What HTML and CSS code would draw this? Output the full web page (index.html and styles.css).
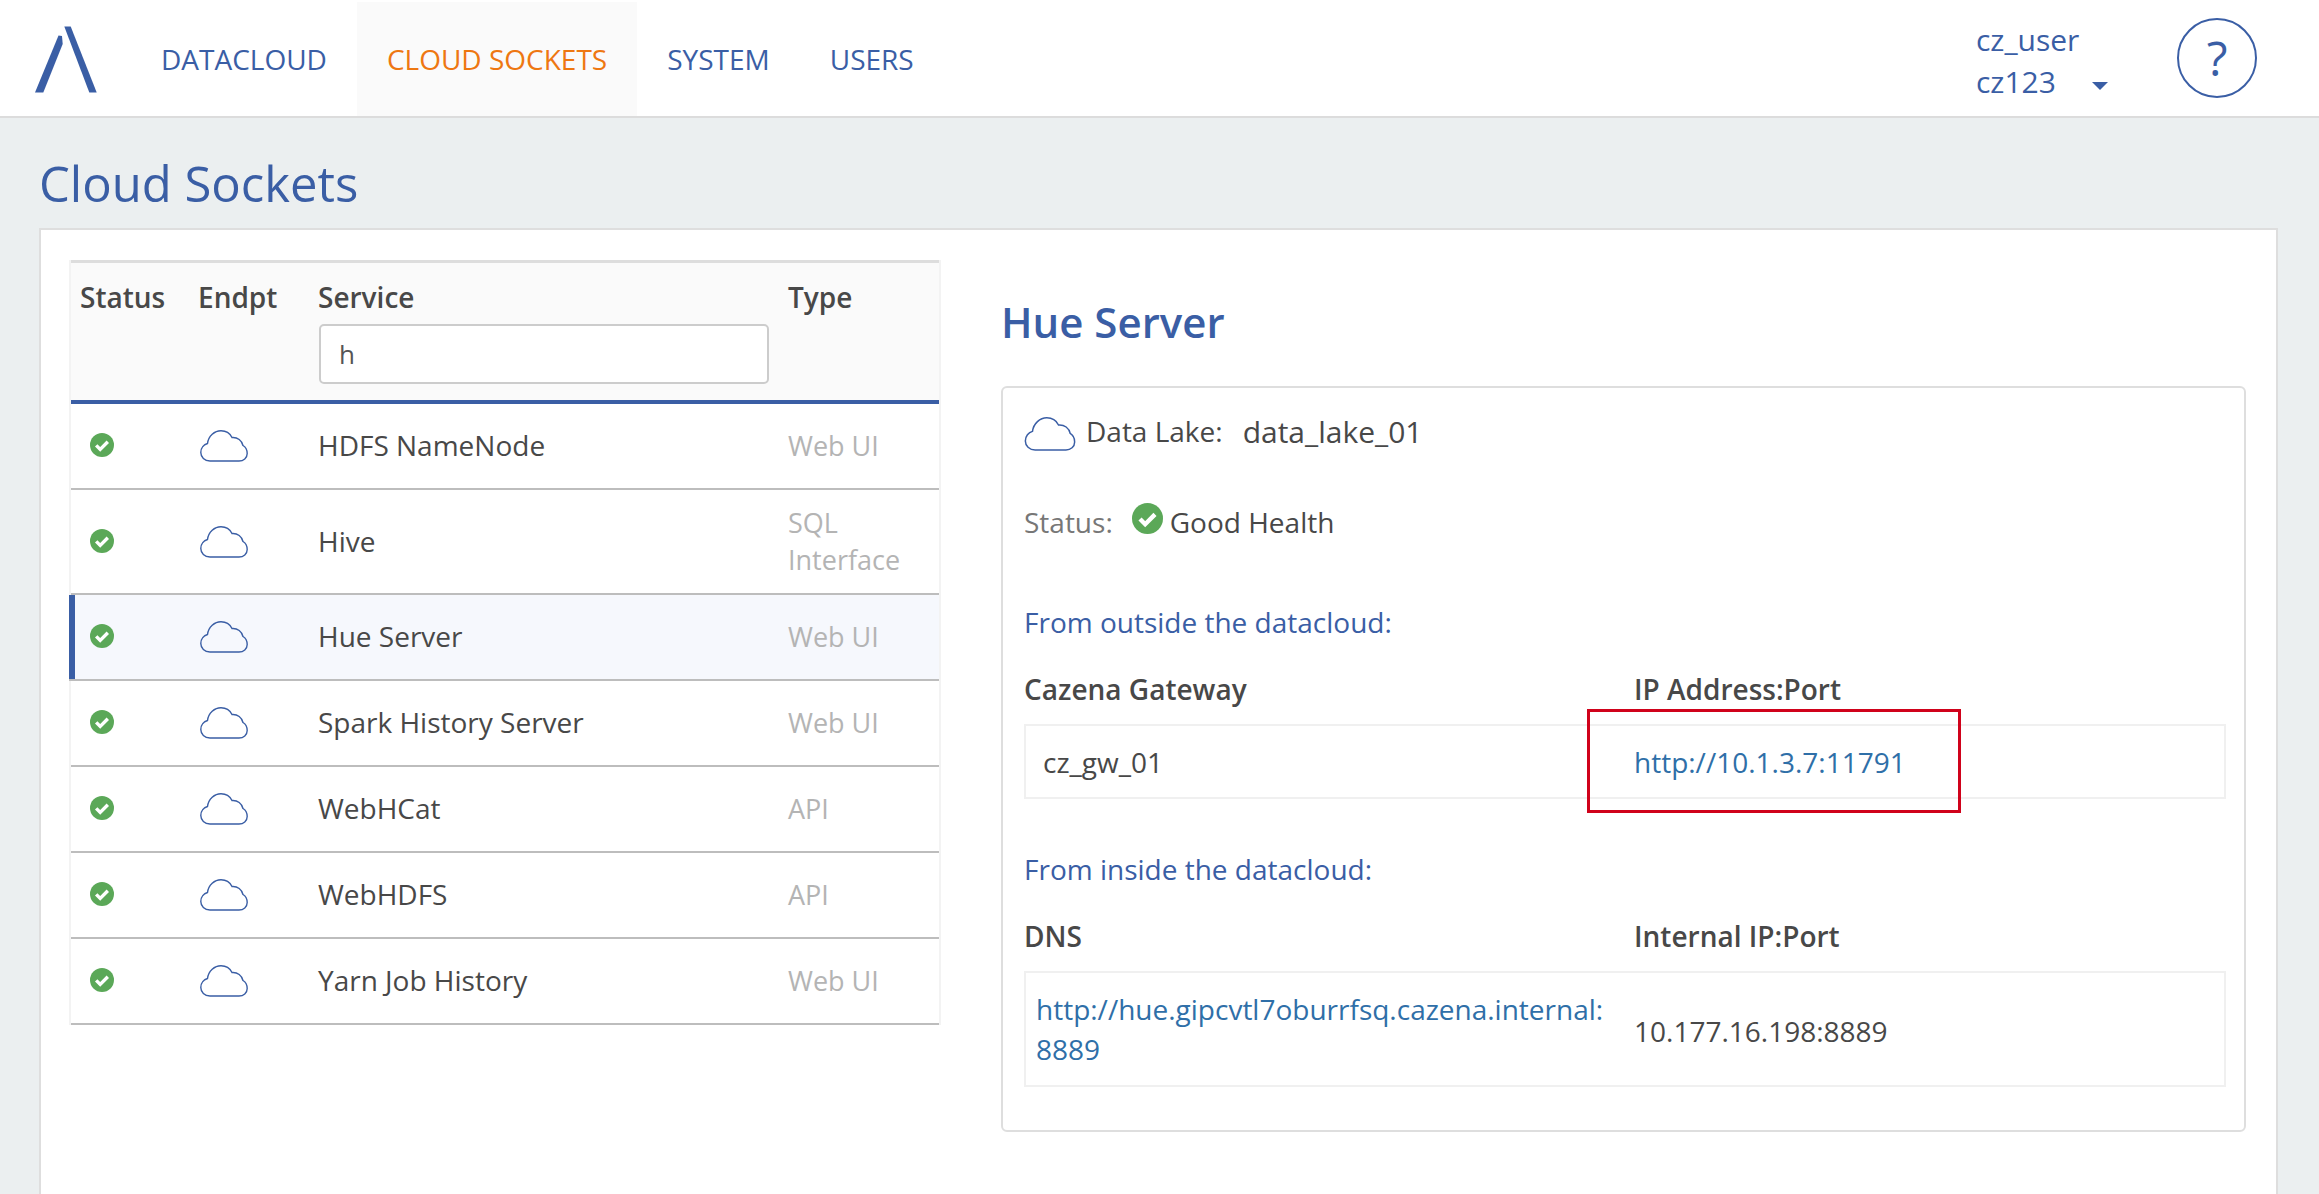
FILE: index.html
```html
<!DOCTYPE html>
<html lang="en">
<head>
    <meta charset="UTF-8">
    <title>Cloud Sockets</title>
    <link rel="stylesheet" href="styles.css">
</head>
<body>
    <svg class="defs" width="0" height="0">
        <symbol id="cloud" viewBox="0 0 48 32">
            <path d="M10 31C4.5 31 .8 27 .8 22.5C.8 18 3.8 14.5 7.5 13.5C8.5 6 14.5 .8 21 .8C26 .8 30 3.5 32 7.5C37.5 7 42 10.5 43 15.5C45.5 17 47.2 20 47.2 23.5C47.2 28 43.5 31 39 31Z" fill="none" stroke="#3a5ea5" stroke-width="1.4"/>
        </symbol>
        <symbol id="ok" viewBox="0 0 24 24">
            <circle cx="12" cy="12" r="12" fill="#5ba858"/>
            <path d="M6.2 12.4L10.2 16.4L17.8 8.8" fill="none" stroke="#fff" stroke-width="3.4"/>
        </symbol>
    </svg>

    <header class="topbar">
        <svg class="logo" width="62" height="68" viewBox="0 0 62 68">
            <polygon points="29.3,.5 35.7,.5 61.7,66.5 54.3,66.5" fill="#3a5ea5"/>
            <polygon points="23.5,9.5 27,10 27.7,18 8.3,66.5 0,66.5" fill="#3a5ea5"/>
        </svg>
        <nav class="nav">
            <a class="nav-item">DATACLOUD</a>
            <a class="nav-item active">CLOUD SOCKETS</a>
            <a class="nav-item">SYSTEM</a>
            <a class="nav-item">USERS</a>
        </nav>
        <div class="user">
            <div>cz_user</div>
            <div class="user-org">cz123 <span class="caret"></span></div>
        </div>
        <div class="help">?</div>
    </header>

    <main class="page">
        <h1>Cloud Sockets</h1>
        <section class="panel">
            <div class="sockets">
                <div class="row head">
                    <div>Status</div>
                    <div>Endpt</div>
                    <div>
                        Service
                        <input class="filter" type="text" value="h">
                    </div>
                    <div>Type</div>
                </div>
                <div class="row">
                    <div><svg class="ok"><use href="#ok"/></svg></div>
                    <div><svg class="cloud"><use href="#cloud"/></svg></div>
                    <div>HDFS NameNode</div>
                    <div class="type">Web UI</div>
                </div>
                <div class="row tall">
                    <div><svg class="ok"><use href="#ok"/></svg></div>
                    <div><svg class="cloud"><use href="#cloud"/></svg></div>
                    <div>Hive</div>
                    <div class="type">SQL Interface</div>
                </div>
                <div class="row selected">
                    <div><svg class="ok"><use href="#ok"/></svg></div>
                    <div><svg class="cloud"><use href="#cloud"/></svg></div>
                    <div>Hue Server</div>
                    <div class="type">Web UI</div>
                </div>
                <div class="row">
                    <div><svg class="ok"><use href="#ok"/></svg></div>
                    <div><svg class="cloud"><use href="#cloud"/></svg></div>
                    <div>Spark History Server</div>
                    <div class="type">Web UI</div>
                </div>
                <div class="row">
                    <div><svg class="ok"><use href="#ok"/></svg></div>
                    <div><svg class="cloud"><use href="#cloud"/></svg></div>
                    <div>WebHCat</div>
                    <div class="type">API</div>
                </div>
                <div class="row">
                    <div><svg class="ok"><use href="#ok"/></svg></div>
                    <div><svg class="cloud"><use href="#cloud"/></svg></div>
                    <div>WebHDFS</div>
                    <div class="type">API</div>
                </div>
                <div class="row">
                    <div><svg class="ok"><use href="#ok"/></svg></div>
                    <div><svg class="cloud"><use href="#cloud"/></svg></div>
                    <div>Yarn Job History</div>
                    <div class="type">Web UI</div>
                </div>
            </div>

            <div class="detail">
                <h2>Hue Server</h2>
                <div class="card">
                    <div class="lake">
                        <svg class="cloud big"><use href="#cloud"/></svg>
                        <span>Data Lake:</span>
                        <span class="lake-name">data_lake_01</span>
                    </div>
                    <div class="health">
                        <span class="muted">Status:</span>
                        <svg class="ok big"><use href="#ok"/></svg>
                        <span>Good Health</span>
                    </div>
                    <div class="sub sub-first">From outside the datacloud:</div>
                    <div class="cols cols-head">
                        <div>Cazena Gateway</div>
                        <div>IP Address:Port</div>
                    </div>
                    <div class="cols cell-row">
                        <div class="pad-gw">cz_gw_01</div>
                        <div><a class="link">http://10.1.3.7:11791</a></div>
                        <div class="highlight"></div>
                    </div>
                    <div class="sub sub-second">From inside the datacloud:</div>
                    <div class="cols cols-head">
                        <div>DNS</div>
                        <div>Internal IP:Port</div>
                    </div>
                    <div class="cols cell-row cell-row-tall">
                        <div class="pad-dns"><a class="link">http://hue.gipcvtl7oburrfsq.cazena.internal:<br>8889</a></div>
                        <div class="cell-ip">10.177.16.198:8889</div>
                    </div>
                </div>
            </div>
        </section>
    </main>
</body>
</html>
```

FILE: styles.css
```css
* {
    box-sizing: border-box;
}

html, body {
    height: 100%;
    margin: 0;
}

body {
    display: flex;
    flex-direction: column;
    overflow: hidden;
    background-color: #ebeff0;
    font-family: "Open Sans", sans-serif;
    font-size: 28px;
    color: #484848;
}

.defs {
    position: absolute;
}

/* top bar */
.topbar {
    display: flex;
    align-items: center;
    height: 118px;
    flex-shrink: 0;
    padding-left: 35px;
    background-color: #ffffff;
    border-bottom: 2px solid #dcdcdc;
}

.logo {
    flex-shrink: 0;
    margin-top: 3px;
}

.nav {
    display: flex;
    align-self: flex-end;
    height: 114px;
    margin-left: 34px;
}

.nav-item {
    display: flex;
    align-items: center;
    padding: 0 30px;
    font-size: 28px;
    color: #3a5ea5;
}

.nav-item.active {
    color: #ee7711;
    background-color: #fafafa;
}

.user {
    margin-left: auto;
    width: 201px;
    padding-top: 6px;
    font-size: 30px;
    line-height: 42px;
    color: #3a5ea5;
}

.user-org {
    display: flex;
    align-items: center;
}

.caret {
    width: 0;
    height: 0;
    margin-left: 36px;
    margin-top: 8px;
    border-left: 8px solid transparent;
    border-right: 8px solid transparent;
    border-top: 8px solid #3a5ea5;
}

.help {
    display: flex;
    align-items: center;
    justify-content: center;
    width: 80px;
    height: 80px;
    margin-right: 62px;
    padding-bottom: 2px;
    border: 2px solid #3a5ea5;
    border-radius: 50%;
    font-size: 48px;
    color: #3a5ea5;
}

/* page */
.page {
    flex: 1;
    display: flex;
    flex-direction: column;
    padding: 0 41px 0 39px;
}

h1 {
    margin: 35px 0 15px;
    font-size: 49px;
    line-height: 60px;
    font-weight: 400;
    color: #3a5ea5;
}

.panel {
    flex: 1;
    display: flex;
    padding: 30px 30px 0 28px;
    background-color: #ffffff;
    border: 2px solid #dedede;
    border-bottom: 0;
}

/* sockets list */
.sockets {
    width: 872px;
    flex-shrink: 0;
    align-self: flex-start;
    border-left: 2px solid #f3f3f3;
    border-right: 2px solid #f3f3f3;
}

.row {
    display: grid;
    grid-template-columns: 116px 120px 470px 1fr;
    align-items: center;
    height: 86px;
    padding-bottom: 2px;
    border-bottom: 2px solid #bdbdbd;
}

.row > div {
    padding-left: 11px;
}

.row > div:first-child {
    padding-left: 19px;
}

.head {
    align-items: start;
    height: 144px;
    padding-top: 15px;
    padding-bottom: 0;
    font-weight: 600;
    background-color: #fafafa;
    border-top: 3px solid #dddddd;
    border-bottom: 4px solid #3a5ea5;
}

.head > div:first-child {
    padding-left: 9px;
}

.filter {
    display: block;
    width: 450px;
    height: 60px;
    margin: 8px 0 0 1px;
    padding: 0 18px;
    font-family: inherit;
    font-size: 26px;
    color: #555555;
    background-color: #ffffff;
    border: 2px solid #cccccc;
    border-radius: 5px;
}

.tall {
    height: 105px;
}

.selected {
    margin-left: -2px;
    padding-left: 2px;
    background-color: #f6f8fd;
    box-shadow: inset 6px 0 0 #3a5ea5;
}

.type {
    font-size: 27px;
    line-height: 37px;
    color: #b4b4b4;
}

.ok {
    display: block;
    width: 24px;
    height: 24px;
}

.cloud {
    display: block;
    width: 48px;
    height: 32px;
    margin: 2px 0 0 2px;
}

/* detail */
.detail {
    flex: 1;
    padding-left: 60px;
}

h2 {
    margin: 28px 0 30px;
    font-size: 42px;
    line-height: 68px;
    font-weight: 600;
    color: #3a5ea5;
}

.card {
    height: 746px;
    padding: 21px 18px 0 21px;
    border: 2px solid #dedede;
    border-radius: 6px;
}

.lake {
    display: flex;
    align-items: center;
    height: 44px;
}

.cloud.big {
    width: 52px;
    height: 34px;
    margin: 6px 10px 0 0;
}

.lake-name {
    margin-left: 20px;
    font-size: 30px;
}

.health {
    display: flex;
    align-items: center;
    height: 44px;
    margin-top: 46px;
    padding-top: 2px;
}

.muted {
    color: #777777;
}

.ok.big {
    width: 31px;
    height: 31px;
    margin: 0 7px 8px 19px;
}

.sub {
    color: #3a5ea5;
    line-height: 36px;
}

.sub-first {
    margin-top: 61px;
}

.sub-second {
    margin-top: 52px;
}

.cols {
    display: grid;
    grid-template-columns: 610px 1fr;
    align-items: center;
}

.cols-head {
    margin-top: 30px;
    height: 36px;
    font-weight: 600;
}

.cell-row {
    position: relative;
    height: 75px;
    margin-top: 18px;
    border: 2px solid #f0f0f0;
}

.cell-row > div:nth-child(2) {
    margin-left: -2px;
}

.cell-row-tall {
    height: 116px;
    line-height: 40px;
}

.cell-ip {
    padding-top: 4px;
}

.pad-gw {
    padding-left: 17px;
}

.pad-dns {
    padding-left: 10px;
}

.link {
    color: #2f6fa8;
}

.highlight {
    position: absolute;
    left: 561px;
    top: -17px;
    width: 374px;
    height: 104px;
    border: 3px solid #d0021b;
    pointer-events: none;
}
```
